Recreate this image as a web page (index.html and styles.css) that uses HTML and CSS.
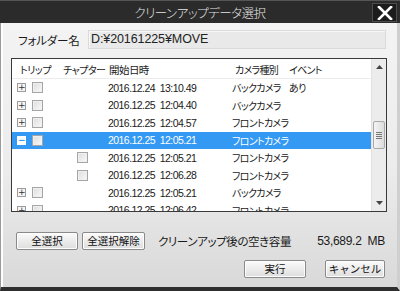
FILE: index.html
```html
<!DOCTYPE html>
<html lang="ja">
<head>
<meta charset="utf-8">
<link rel="stylesheet" href="styles.css">
</head>
<body>
<div class="window">
  <div class="titlebar">
    <div class="title">クリーンアップデータ選択</div>
    <div class="close"><svg width="16" height="14" viewBox="0 0 16 14"><path d="M2 1 L14 13 M14 1 L2 13" stroke="#fff" stroke-width="2.6" stroke-linecap="square"/></svg></div>
  </div>
  <div class="body">
    <div class="folder-row">
      <span class="label">フォルダー名</span>
      <div class="input">D:¥20161225¥MOVE</div>
    </div>
    <div class="list">
      <div class="list-main">
        <div class="row head">
          <span class="c-trip h1">トリップ</span>
          <span class="c-chap h2">チャプター</span>
          <span class="c-date h3">開始日時</span>
          <span class="c-cam h4">カメラ種別</span>
          <span class="c-evt">イベント</span>
        </div>
        <div class="row">
          <span class="c-trip"><i class="exp">+</i><i class="cb"></i></span>
          <span class="c-chap"></span>
          <span class="c-date">2016.12.24&nbsp;&nbsp;13:10.49</span>
          <span class="c-cam">バックカメラ</span>
          <span class="c-evt">あり</span>
        </div>
        <div class="row">
          <span class="c-trip"><i class="exp">+</i><i class="cb"></i></span>
          <span class="c-chap"></span>
          <span class="c-date">2016.12.25&nbsp;&nbsp;12:04.40</span>
          <span class="c-cam">バックカメラ</span>
          <span class="c-evt"></span>
        </div>
        <div class="row">
          <span class="c-trip"><i class="exp">+</i><i class="cb"></i></span>
          <span class="c-chap"></span>
          <span class="c-date">2016.12.25&nbsp;&nbsp;12:04.57</span>
          <span class="c-cam">フロントカメラ</span>
          <span class="c-evt"></span>
        </div>
        <div class="row sel">
          <span class="c-trip"><i class="exp open">−</i><i class="cb"></i></span>
          <span class="c-chap"></span>
          <span class="c-date">2016.12.25&nbsp;&nbsp;12:05.21</span>
          <span class="c-cam">フロントカメラ</span>
          <span class="c-evt"></span>
        </div>
        <div class="row">
          <span class="c-trip"></span>
          <span class="c-chap"><i class="cb"></i></span>
          <span class="c-date">2016.12.25&nbsp;&nbsp;12:05.21</span>
          <span class="c-cam">フロントカメラ</span>
          <span class="c-evt"></span>
        </div>
        <div class="row">
          <span class="c-trip"></span>
          <span class="c-chap"><i class="cb"></i></span>
          <span class="c-date">2016.12.25&nbsp;&nbsp;12:06.28</span>
          <span class="c-cam">フロントカメラ</span>
          <span class="c-evt"></span>
        </div>
        <div class="row">
          <span class="c-trip"><i class="exp">+</i><i class="cb"></i></span>
          <span class="c-chap"></span>
          <span class="c-date">2016.12.25&nbsp;&nbsp;12:05.21</span>
          <span class="c-cam">バックカメラ</span>
          <span class="c-evt"></span>
        </div>
        <div class="row">
          <span class="c-trip"><i class="exp">+</i><i class="cb"></i></span>
          <span class="c-chap"></span>
          <span class="c-date">2016.12.25&nbsp;&nbsp;12:06.42</span>
          <span class="c-cam">フロントカメラ</span>
          <span class="c-evt"></span>
        </div>
      </div>
      <div class="scrollbar">
        <div class="arrow"><svg width="7" height="4" viewBox="0 0 7 4"><path d="M0 4 L3.5 0 L7 4 Z" fill="#444"/></svg></div>
        <div class="track"><div class="thumb"><span></span><span></span><span></span><span></span></div></div>
        <div class="arrow"><svg width="7" height="4" viewBox="0 0 7 4"><path d="M0 0 L7 0 L3.5 4 Z" fill="#444"/></svg></div>
      </div>
    </div>
    <div class="actions">
      <button class="btn b-all">全選択</button>
      <button class="btn b-none">全選択解除</button>
      <span class="free-label">クリーンアップ後の空き容量</span>
      <span class="free-val">53,689.2&nbsp;&nbsp;MB</span>
    </div>
    <div class="footer">
      <button class="btn b-ok">実行</button>
      <button class="btn b-cancel">キャンセル</button>
    </div>
  </div>
</div>
</body>
</html>
```

FILE: styles.css
```css
* { box-sizing: border-box; }
html, body { margin: 0; padding: 0; }
body {
  width: 400px;
  height: 291px;
  overflow: hidden;
  font-family: "Liberation Sans", "Noto Sans CJK JP", sans-serif;
  font-feature-settings: "palt";
  color: #1a1a1a;
}
.jp, .title, .label, .row.head, .c-cam, .c-evt, .btn, .free-label {
  font-family: "Noto Sans CJK JP", sans-serif;
  font-weight: 300;
}
.window {
  width: 400px;
  height: 291px;
  display: flex;
  flex-direction: column;
  background: #2a2a2a;
}
.titlebar {
  height: 23px;
  flex: none;
  display: flex;
  align-items: center;
  position: relative;
  background: #2b2b2b;
  border-top: 1px solid #555;
}
.title {
  flex: 1;
  text-align: center;
  color: #e4e4e4;
  font-size: 12.5px;
  letter-spacing: -0.5px;
  padding-left: 0;
}
.close {
  position: absolute;
  right: 3px;
  top: 2px;
  width: 25px;
  height: 19px;
  background: #1c1c1c;
  border: 1px solid #4c4c4c;
  display: flex;
  align-items: center;
  justify-content: center;
}
.body {
  flex: 1;
  display: flex;
  flex-direction: column;
  background: linear-gradient(#f3f3f3, #ececec 55%, #d9d9d9);
  border-left: 1px solid #9a9a9a;
  border-right: 3px solid #cfcfcf;
  border-bottom: 4px solid #2e2e2e;
  box-shadow: inset 2px 0 0 #fdfdfd;
  padding: 7px 10px 0 10px;
}
.folder-row {
  display: flex;
  align-items: center;
  height: 19px;
}
.label {
  font-size: 11.5px;
  width: 77px;
  padding-left: 7px;
  white-space: nowrap;
  font-weight: 400;
  letter-spacing: -0.2px;
}
.input {
  flex: 1;
  height: 19px;
  margin-right: 1px;
  background: #e9e9e9;
  border: 1px solid #dadada;
  box-shadow: inset 1px 1px 0 #f8f8f8;
  font-size: 12.5px;
  line-height: 17px;
  padding-left: 2px;
  letter-spacing: -0.1px;
  color: #222;
}
.list {
  margin-top: 9px;
  height: 154px;
  display: flex;
  border: 1px solid #3a3a3a;
  background: #fff;
  overflow: hidden;
}
.list-main {
  flex: 1;
  display: flex;
  flex-direction: column;
  overflow: hidden;
}
.row {
  flex: none;
  height: 17.5px;
  display: grid;
  grid-template-columns: 51px 45px 124px 56px 1fr;
  align-items: center;
  font-size: 10px;
  white-space: nowrap;
}
.row > span { display: flex; align-items: center; }
.row.head {
  height: 20px;
  border-bottom: 1px solid #ececec;
  font-size: 10px;
  letter-spacing: -0.5px;
  padding-top: 1px;
  font-weight: 400;
}
.head .h1 { padding-left: 8px; }
.head .h2 { padding-left: 0; }
.head .h3 { padding-left: 1px; }
.head .h4 { padding-left: 3px; }
.c-date { letter-spacing: -0.55px; font-size: 10.5px; }
.c-cam, .c-evt { font-size: 10px; letter-spacing: -0.7px; font-weight: 400; }
.c-evt { padding-left: 1px; }
.row.sel { background: #3399f3; color: #fff; }
.c-trip { padding-left: 5px; }
.exp {
  width: 9px;
  height: 9px;
  border: 1px solid #9c9c9c;
  background: #f5f5f5;
  font-style: normal;
  font-size: 9px;
  line-height: 7px;
  text-align: center;
  color: #333;
  font-family: "DejaVu Sans", sans-serif;
  margin-right: 6px;
}
.exp.open { background: #fff; border-color: #fff; color: #3399f3; font-weight: bold; }
.cb {
  width: 11px;
  height: 11px;
  border: 1px solid #a5a5a5;
  background: linear-gradient(135deg, #dcdcdc, #fafafa);
  box-shadow: inset 0 0 0 1px #f0f0f0;
}
.c-chap { padding-left: 14px; }
.scrollbar {
  width: 15px;
  flex: none;
  display: flex;
  flex-direction: column;
  background: #ececec;
  border-left: 1px solid #e2e2e2;
}
.arrow {
  height: 16px;
  display: flex;
  align-items: center;
  justify-content: center;
  flex: none;
}
.track { flex: 1; }
.thumb {
  margin-top: 46px;
  height: 28px;
  margin-left: 1px;
  margin-right: 1px;
  border: 1px solid #a9a9a9;
  border-radius: 2px;
  background: linear-gradient(90deg, #f4f4f4, #dcdcdc);
  display: flex;
  flex-direction: column;
  align-items: center;
  justify-content: center;
  gap: 1px;
}
.thumb span { width: 6px; height: 1px; background: #777; }
.actions {
  margin-top: 20px;
  display: flex;
  align-items: center;
  height: 18px;
}
.btn {
  height: 18px;
  padding: 0;
  border: 1px solid #8a8a8a;
  border-radius: 2px;
  background: linear-gradient(#fbfbfb, #ececec 50%, #dedede);
  box-shadow: inset 0 0 0 1px #fdfdfd;
  font-size: 10.5px;
  font-weight: 400;
  color: #111;
  line-height: 16px;
}
.b-all { width: 62px; margin-left: 5px; }
.b-none { width: 63px; margin-left: 4px; }
.free-label {
  font-size: 11.5px;
  margin-left: 13px;
  letter-spacing: -0.4px;
  font-weight: 400;
  flex: 1;
}
.free-val { font-size: 12px; margin-right: 2px; letter-spacing: -0.3px; }
.footer {
  margin-top: 10px;
  display: flex;
  justify-content: flex-end;
  gap: 19px;
  padding-right: 2px;
}
.b-ok { width: 62px; }
.b-cancel { width: 60px; }
```
